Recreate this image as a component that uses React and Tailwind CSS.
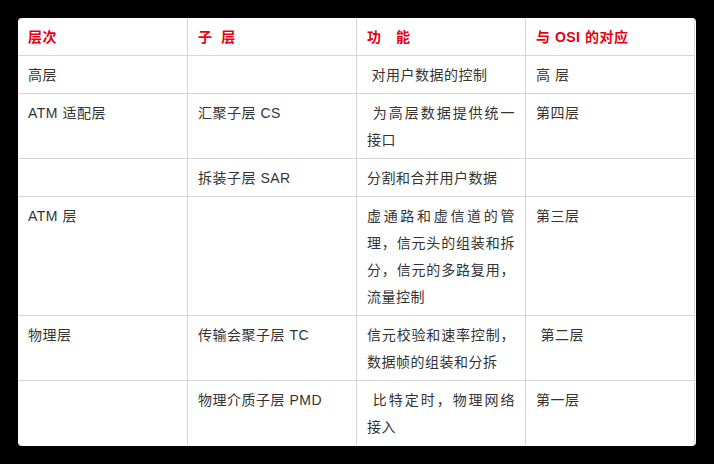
import React from 'react';

const headers = ['层次', '子\u00a0\u00a0层', '功\u3000能', '与 OSI 的对应'];

// each row: [层次, 子层, 功能, 与 OSI 的对应]
const rows = [
  ['高层', '', '\u00a0对用户数据的控制', '高 层'],
  ['ATM 适配层', '汇聚子层 CS', '\u00a0为高层数据提供统一接口', '第四层'],
  ['', '拆装子层 SAR', '分割和合并用户数据', ''],
  ['ATM 层', '', '虚通路和虚信道的管理，信元头的组装和拆分，信元的多路复用，流量控制', '第三层'],
  ['物理层', '传输会聚子层 TC', '信元校验和速率控制，数据帧的组装和分拆', '\u00a0第二层'],
  ['', '物理介质子层 PMD', '\u00a0比特定时，物理网络接入', '第一层'],
];

const App = () => {
  return (
    <div className="w-[714px] h-[464px] bg-black p-[18px]">
      <div
        className="w-[678px] h-[428px] bg-white rounded-[4px] overflow-hidden text-[14px] tracking-[0.5px] text-[#333]"
        style={{ fontFamily: '"Liberation Sans", "Noto Sans CJK SC", sans-serif' }}
      >
        <div className="grid grid-cols-[170px_169px_169px_169px]">
          {/* Header */}
          {headers.map((h, i) => (
            <div
              key={`h${i}`}
              className="border-r border-b border-[#d6d6d6] pl-[10px] pr-[10px] pt-[6px] pb-[4px] leading-[27px] font-bold text-[#e60012]"
            >
              {h}
            </div>
          ))}

          {/* Body rows */}
          {rows.map((row, r) =>
            row.map((cell, c) => (
              <div
                key={`${r}-${c}`}
                className={`border-r border-[#d6d6d6] pl-[10px] pr-[10px] pt-[6px] pb-[4px] leading-[27px] text-justify ${
                  r === rows.length - 1 ? 'border-b-0' : 'border-b'
                }`}
              >
                {cell}
              </div>
            ))
          )}
        </div>
      </div>
    </div>
  );
};

export default App;
